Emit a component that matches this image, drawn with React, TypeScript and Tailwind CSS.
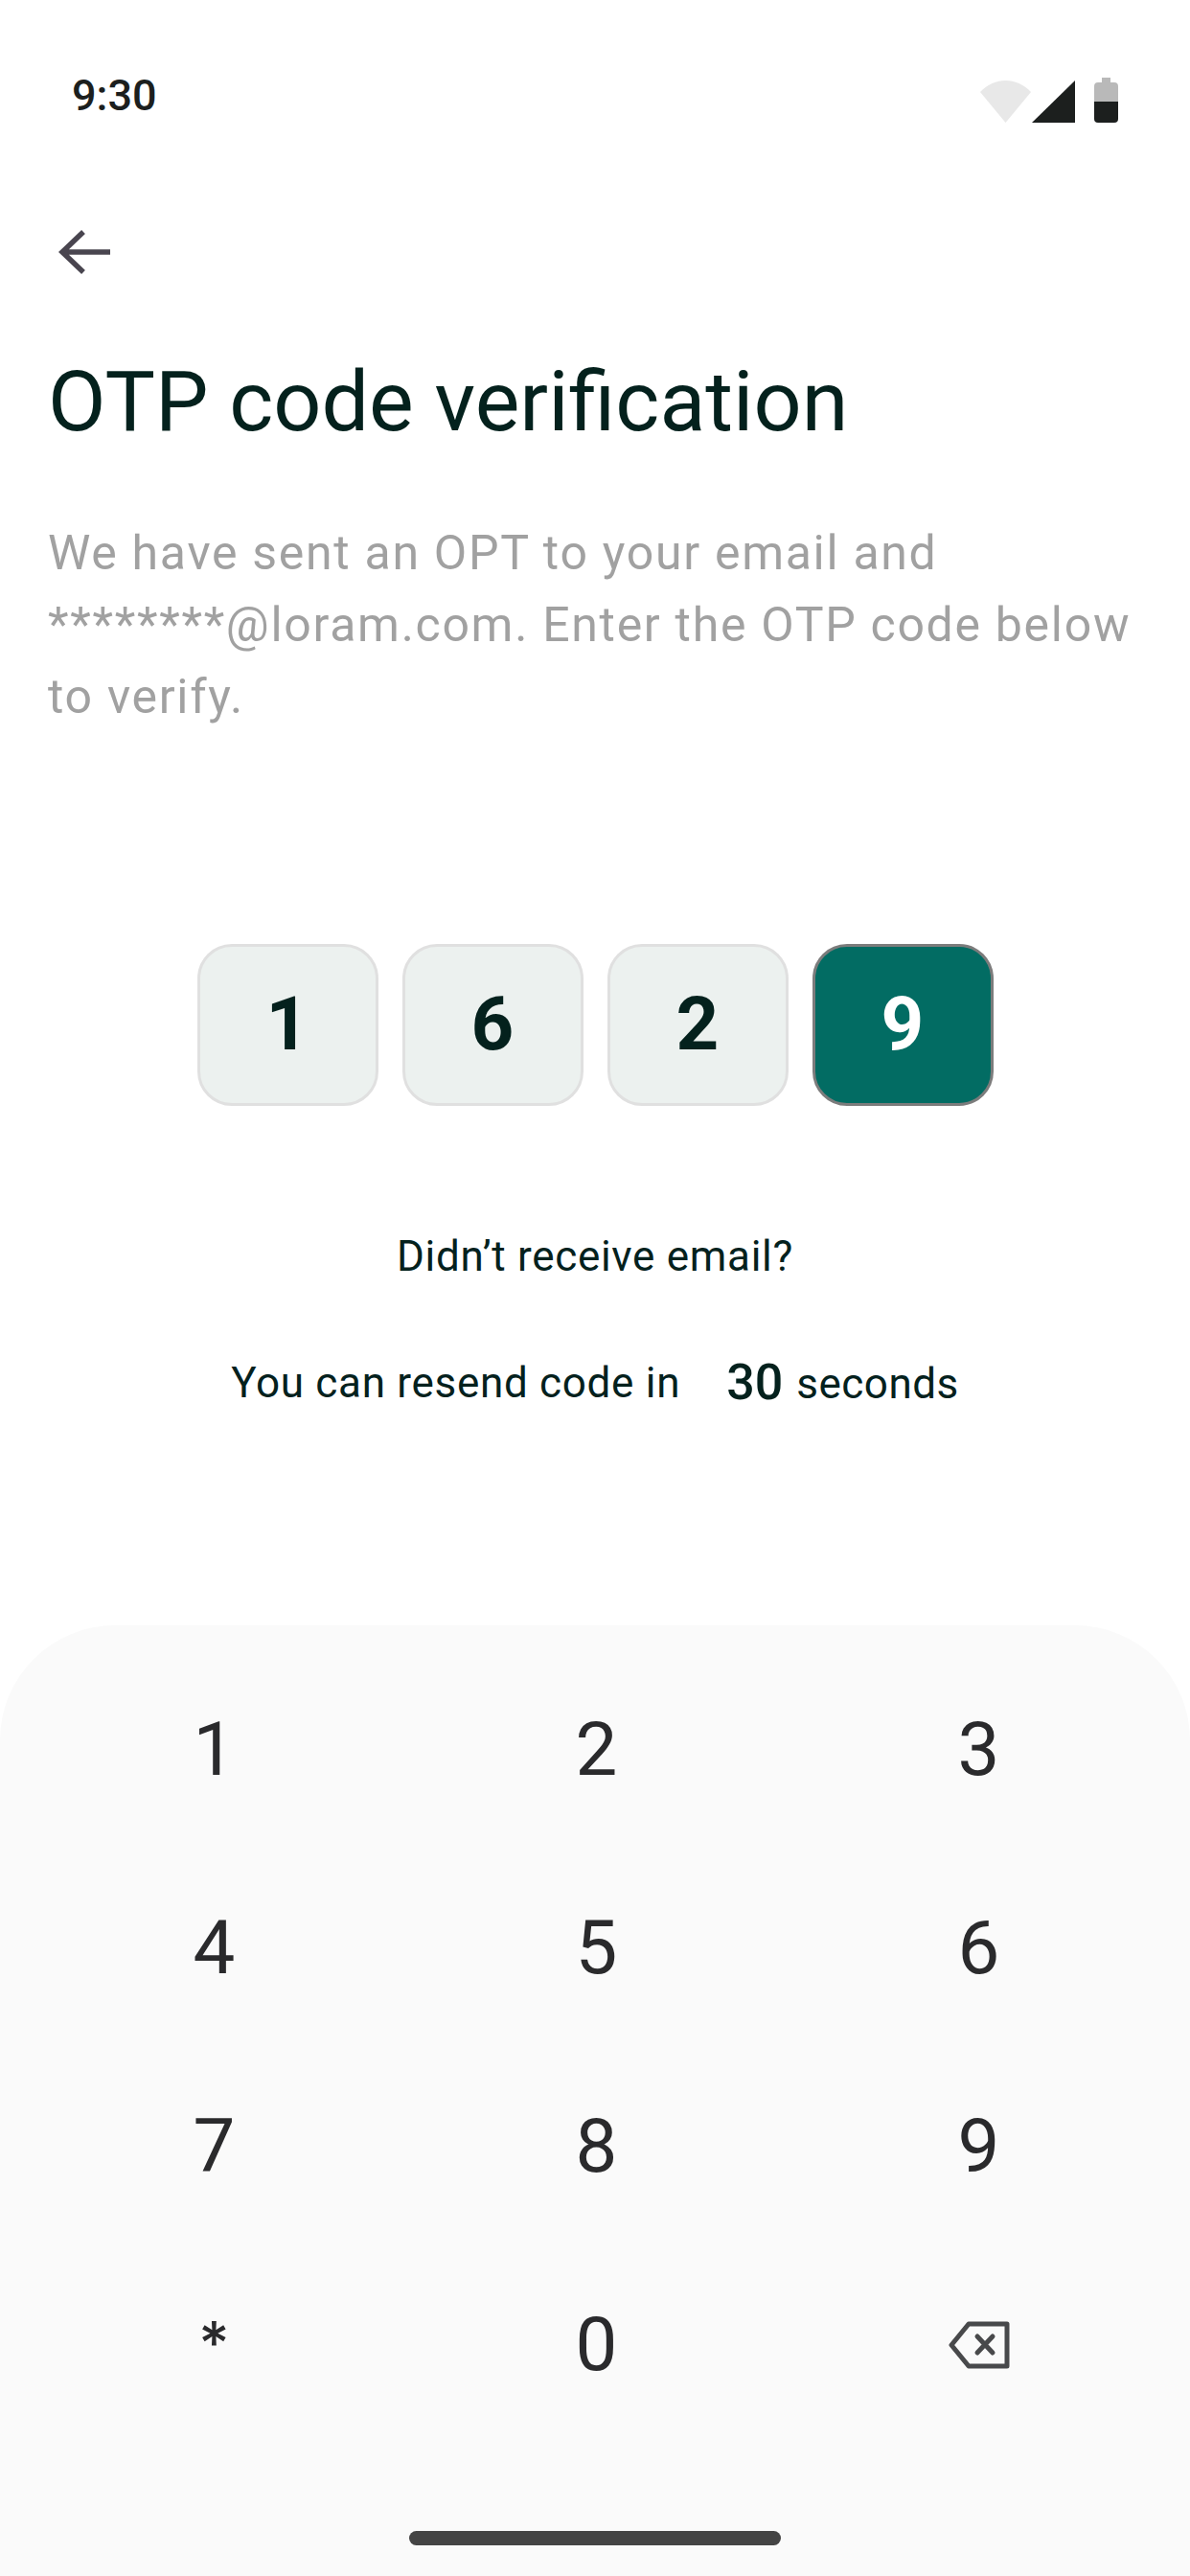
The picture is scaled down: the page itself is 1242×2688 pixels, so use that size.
const otp = ["1", "6", "2", "9"];
const keys = ["1", "2", "3", "4", "5", "6", "7", "8", "9", "*", "0"];

function StatusIcons() {
  return (
    <div className="flex items-end">
      <svg width="53" height="44" viewBox="0 0 53 44">
        <path d="M0 12 C15 -4 38 -4 53 12 L26.5 44 Z" fill="#e8e8e8" />
      </svg>
      <svg width="45" height="44" viewBox="0 0 45 44" className="ml-[1px] mr-[20px]">
        <path d="M45 0 V44 H0 Z" fill="#1c1f1e" />
      </svg>
      <svg width="25" height="47" viewBox="0 0 25 47">
        <path d="M8 0 H17 V5 H21 Q25 5 25 9 V25 H0 V9 Q0 5 4 5 H8 Z" fill="#b9b9b9" />
        <path d="M0 25 H25 V43 Q25 47 21 47 H4 Q0 47 0 43 Z" fill="#1c1f1e" />
      </svg>
    </div>
  );
}

function BackspaceIcon() {
  return (
    <svg width="64" height="50" viewBox="0 0 64 50" fill="none" stroke="#48494b" strokeWidth="5" strokeLinecap="round" strokeLinejoin="round">
      <path d="M21 3 H61 V47 H21 L3 25 Z" />
      <path d="M30 16 L46 33 M46 16 L30 33" />
    </svg>
  );
}

export default function App() {
  return (
    <div className="flex h-[2688px] w-[1242px] flex-col overflow-hidden bg-white font-['Roboto',sans-serif]">
      <div className="flex h-[130px] items-end justify-between pb-[2px] pl-[75px] pr-[75px]">
        <span className="mb-[3px] text-[45px] font-medium leading-[50px] text-[#1c1f1e]">9:30</span>
        <StatusIcons />
      </div>

      <div className="px-[50px]">
        <svg width="54" height="46" viewBox="0 0 54 46" className="mt-[110px] ml-[11px]" fill="none" stroke="#49454f" strokeWidth="5.5">
          <path d="M54 23 H5 M26 2 L4 23 L26 44" />
        </svg>

        <h1 className="mt-[83px] text-[88px] font-normal leading-[100px] text-[#04211d]">OTP code verification</h1>

        <p className="mt-[71px] w-[1140px] text-[50px] leading-[75px] tracking-[1.7px] text-[#a1a1a1]">
          We have sent an OPT to your email and ********@loram.com. Enter the OTP code below to verify.
        </p>
      </div>

      <div className="mt-[220px] flex justify-center gap-[25px]">
        {otp.map((digit, i) => (
          <div
            key={i}
            className={
              i === 3
                ? "flex h-[169px] w-[189px] items-center justify-center rounded-[36px] border-[3px] border-[#7c7c7c] bg-[#026c63] pb-[2px] text-[78px] font-bold text-white"
                : "flex h-[169px] w-[189px] items-center justify-center rounded-[36px] border-[3px] border-[#e0e0e0] bg-[#ecf1ef] pb-[2px] text-[78px] font-bold text-[#04211d]"
            }
          >
            {digit}
          </div>
        ))}
      </div>

      <p className="mt-[129px] text-center text-[44px] leading-[56px] tracking-[0.7px] text-[#04211d]">Didn’t receive email?</p>

      <div className="mt-[75px] flex items-center justify-center text-[44px] leading-[56px] tracking-[0.7px] text-[#04211d]">
        <span>You can resend code in</span>
        <span className="ml-[48px] text-[52px] font-medium tracking-normal">30</span>
        <span className="ml-[14px] mt-[2px] tracking-[0.5px]">seconds</span>
      </div>

      <div className="mt-[224px] flex flex-1 flex-col rounded-t-[120px] bg-[#fafafa]">
        <div className="mt-[26px] grid grid-cols-3 pl-[24px] pr-[21px]">
          {keys.map((k) => (
            <div
              key={k}
              className={
                k === "*"
                  ? "flex h-[207px] items-start justify-center pt-[71px] font-['Inter',sans-serif] text-[62px] font-medium leading-none text-[#2a2a2c]"
                  : "flex h-[207px] items-center justify-center text-[78px] leading-none text-[#2a2a2c]"
              }
            >
              {k}
            </div>
          ))}
          <div className="flex h-[207px] items-center justify-center">
            <BackspaceIcon />
          </div>
        </div>
        <div className="mx-auto mt-[91px] h-[15px] w-[388px] rounded-full bg-[#444444]" />
      </div>
    </div>
  );
}
